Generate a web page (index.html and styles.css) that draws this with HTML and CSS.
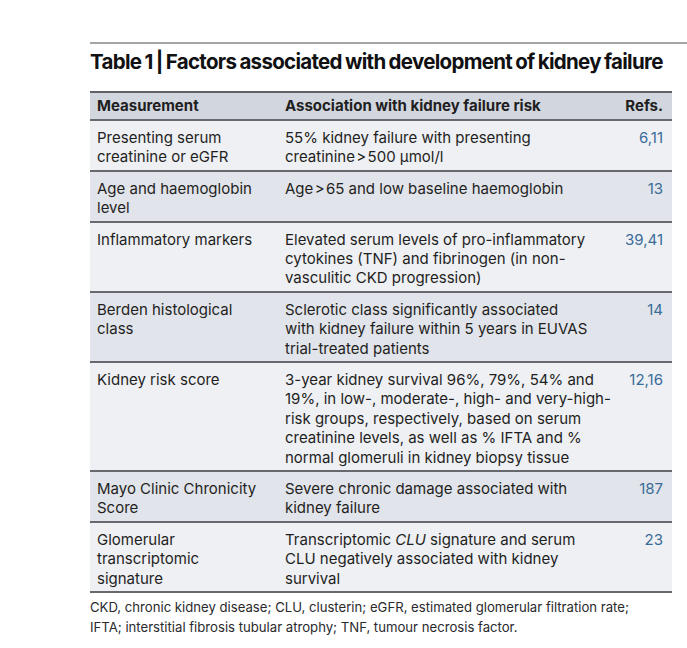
FILE: index.html
```html
<!DOCTYPE html>
<html lang="en">
<head>
<meta charset="utf-8">
<title>Table 1 | Factors associated with development of kidney failure</title>
<link rel="stylesheet" href="styles.css">
</head>
<body>
<div class="page">
  <div class="rule"></div>
  <h1 class="title">Table 1 | Factors associated with development of kidney failure</h1>
  <div class="table">
    <div class="row head">
      <div class="c1">Measurement</div>
      <div class="c2">Association with kidney failure risk</div>
      <div class="c3">Refs.</div>
    </div>
    <div class="row light">
      <div class="c1">Presenting serum<br>creatinine or eGFR</div>
      <div class="c2">55% kidney failure with presenting<br>creatinine&#8202;&gt;&#8202;500&nbsp;µmol/l</div>
      <div class="c3 ref">6,11</div>
    </div>
    <div class="row dark">
      <div class="c1">Age and haemoglobin<br>level</div>
      <div class="c2">Age&#8202;&gt;&#8202;65 and low baseline haemoglobin</div>
      <div class="c3 ref">13</div>
    </div>
    <div class="row light">
      <div class="c1">Inflammatory markers</div>
      <div class="c2">Elevated serum levels of pro-inflammatory<br>cytokines (TNF) and fibrinogen (in non-<br>vasculitic CKD progression)</div>
      <div class="c3 ref">39,41</div>
    </div>
    <div class="row dark">
      <div class="c1">Berden histological<br>class</div>
      <div class="c2">Sclerotic class significantly associated<br>with kidney failure within 5 years in EUVAS<br>trial-treated patients</div>
      <div class="c3 ref">14</div>
    </div>
    <div class="row light">
      <div class="c1">Kidney risk score</div>
      <div class="c2">3-year kidney survival 96%, 79%, 54% and<br>19%, in low-, moderate-, high- and very-high-<br>risk groups, respectively, based on serum<br>creatinine levels, as well as % IFTA and %<br>normal glomeruli in kidney biopsy tissue</div>
      <div class="c3 ref">12,16</div>
    </div>
    <div class="row dark">
      <div class="c1">Mayo Clinic Chronicity<br>Score</div>
      <div class="c2">Severe chronic damage associated with<br>kidney failure</div>
      <div class="c3 ref">187</div>
    </div>
    <div class="row light last">
      <div class="c1">Glomerular<br>transcriptomic<br>signature</div>
      <div class="c2">Transcriptomic <i>CLU</i> signature and serum<br>CLU negatively associated with kidney<br>survival</div>
      <div class="c3 ref">23</div>
    </div>
  </div>
  <p class="note">CKD, chronic kidney disease; CLU, clusterin; eGFR, estimated glomerular filtration rate;<br>IFTA; interstitial fibrosis tubular atrophy; TNF, tumour necrosis factor.</p>
</div>
</body>
</html>
```
FILE: styles.css
```css
html, body {
  margin: 0;
  padding: 0;
  background: #ffffff;
}
body {
  font-family: Inter, "Noto Sans", "Liberation Sans", sans-serif;
  color: #1f1f22;
}
.page {
  padding-top: 42px;
  padding-left: 90px;
}
.rule {
  height: 2px;
  background: #a3a5a8;
}
.title {
  margin: 0;
  padding-top: 6px;
  font-size: 20.5px;
  line-height: 24px;
  font-weight: 700;
  letter-spacing: -0.7px;
  word-spacing: -1px;
  color: #111113;
  white-space: nowrap;
}
.table {
  margin-top: 17px;
  width: 582px;
  border-top: 2px solid #5f6166;
}
.row {
  display: grid;
  grid-template-columns: 195px minmax(0, 1fr) 62px;
  font-size: 15px;
  line-height: 19.4px;
  border-bottom: 2px solid #67696e;
  white-space: nowrap;
}
.row > div {
  padding: 7px 0 3px 0;
}
.c1 {
  padding-left: 7px !important;
}
.c3 {
  text-align: right;
  padding-right: 9px !important;
}
.head {
  background: #d2d6de;
  font-weight: 700;
}
.head > div {
  padding: 3px 0 3.5px 0;
}
.light {
  background: #eef0f4;
}
.dark {
  background: #e1e4ea;
}
.ref {
  color: #3a6c98;
}
.note {
  margin: 4px 0 0 0;
  font-size: 13.15px;
  line-height: 20px;
  color: #2a2a2d;
  white-space: nowrap;
}
```
